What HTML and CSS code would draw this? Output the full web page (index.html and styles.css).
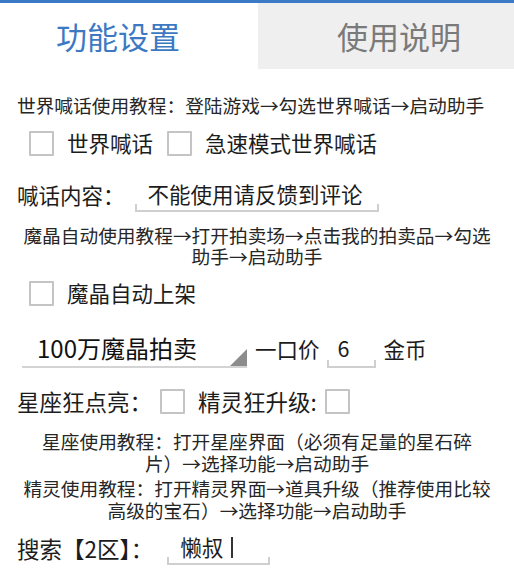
FILE: index.html
```
<!DOCTYPE html>
<html lang="zh-CN">
<head>
<meta charset="utf-8">
<link rel="stylesheet" href="styles.css">
</head>
<body>
<div class="topbar"></div>
<div class="tabs">
  <div class="tab tab-active">功能设置</div>
  <div class="tab tab-idle">使用说明</div>
</div>
<div class="content">
  <div class="tut tut-left tut1">世界喊话使用教程<span class="p">：</span>登陆游戏→勾选世界喊话→启动助手</div>
  <div class="row row-check row-a">
    <span class="cb"></span><span class="label">世界喊话</span>
    <span class="cb"></span><span class="label">急速模式世界喊话</span>
  </div>
  <div class="row row-shout">
    <span class="label">喊话内容<span class="p">：</span></span>
    <div class="edit edit-shout">不能使用请反馈到评论</div>
  </div>
  <div class="tut tut2">魔晶自动使用教程→打开拍卖场→点击我的拍卖品→勾选<br>助手→启动助手</div>
  <div class="row row-check row-b">
    <span class="cb"></span><span class="label">魔晶自动上架</span>
  </div>
  <div class="row row-sell">
    <div class="spinner">100万魔晶拍卖</div>
    <span class="label label-price">一口价</span>
    <div class="edit edit-price">6</div>
    <span class="label">金币</span>
  </div>
  <div class="row row-star">
    <span class="label label-big">星座狂点亮<span class="p">：</span></span>
    <span class="cb"></span>
    <span class="label label-big">精灵狂升级:</span>
    <span class="cb"></span>
  </div>
  <div class="tut tut3">星座使用教程<span class="p">：</span>打开星座界面<span class="p">（</span>必须有足量的星石碎<br>片<span class="p">）</span>→选择功能→启动助手</div>
  <div class="tut tut4">精灵使用教程<span class="p">：</span>打开精灵界面→道具升级<span class="p">（</span>推荐使用比较<br>高级的宝石<span class="p">）</span>→选择功能→启动助手</div>
  <div class="row row-search">
    <span class="label label-big">搜索【2区】<span class="p">：</span></span>
    <div class="edit edit-search">懒叔<span class="caret"></span></div>
  </div>
</div>
</body>
</html>
```
FILE: styles.css
```
html, body {
  margin: 0;
  padding: 0;
  background: #ffffff;
}
body {
  width: 514px;
  height: 569px;
  overflow: hidden;
  font-family: "Noto Sans CJK SC", "Noto Sans", sans-serif;
  color: #1c1c1c;
}
.p {
  font-family: "Noto Sans CJK TC", "Noto Sans CJK SC", sans-serif;
}
.topbar {
  height: 3px;
  background: #3b7bc6;
}
.tabs {
  display: grid;
  grid-template-columns: 258px 256px;
  height: 66px;
}
.tab {
  display: flex;
  align-items: center;
  justify-content: center;
  font-size: 31px;
  line-height: 66px;
}
.tab-active {
  background: #ffffff;
  color: #3c79c2;
  padding-right: 22px;
}
.tab-idle {
  background: #efefef;
  color: #7a7a7a;
  padding-left: 26px;
}
.content {
  display: flex;
  flex-direction: column;
}
.tut {
  font-size: 18.7px;
  line-height: 22px;
  color: #262626;
  text-align: center;
  white-space: nowrap;
}
.tut-left {
  text-align: left;
  padding-left: 17px;
}
.tut1 { margin-top: 25px; }
.tut2 { margin-top: 12px; line-height: 21px; }
.tut3 { margin-top: 14px; }
.tut4 { margin-top: 3px; line-height: 21.5px; }
.row {
  display: flex;
  align-items: center;
  white-space: nowrap;
}
.label {
  font-size: 21.5px;
  line-height: 30px;
  color: #1c1c1c;
}
.label-big {
  font-size: 22.5px;
}
.cb {
  width: 25px;
  height: 25px;
  box-sizing: border-box;
  border: 2px solid #c4c4c4;
  border-radius: 1px;
  flex: none;
}
.row-check {
  height: 30px;
  padding-left: 29px;
}
.row-check .cb + .label { margin-left: 13px; }
.row-check .label + .cb { margin-left: 14px; }
.row-a { margin-top: 12px; }
.row-b { margin-top: 12px; }
.row-shout {
  margin-top: 20px;
  height: 34px;
  padding-left: 17px;
}
.edit {
  position: relative;
  box-sizing: border-box;
  display: flex;
  align-items: center;
  border-bottom: 2px solid #cfcfcf;
  font-size: 21.5px;
  color: #1c1c1c;
}
.edit::before,
.edit::after {
  content: "";
  position: absolute;
  bottom: 0;
  width: 2px;
  height: 6px;
  background: #cfcfcf;
}
.edit::before { left: 0; }
.edit::after { right: 0; }
.edit-shout {
  margin-left: 10px;
  width: 244px;
  height: 34px;
  padding-left: 13px;
  line-height: 32px;
}
.row-sell {
  margin-top: 22px;
  height: 38px;
  padding-left: 22px;
}
.spinner {
  position: relative;
  box-sizing: border-box;
  width: 225px;
  height: 38px;
  padding-left: 15px;
  border-bottom: 2px solid #d4d4d4;
  font-size: 24px;
  line-height: 36px;
  color: #111111;
}
.spinner::after {
  content: "";
  position: absolute;
  right: 0;
  bottom: 0;
  width: 0;
  height: 0;
  border-style: solid;
  border-width: 0 0 17px 17px;
  border-color: transparent transparent #8c8c8c transparent;
}
.label-price { margin-left: 8px; }
.edit-price {
  margin-left: 7px;
  margin-right: 8px;
  width: 49px;
  height: 38px;
  padding-left: 11px;
  line-height: 36px;
}
.row-star {
  margin-top: 18px;
  height: 30px;
  padding-left: 17px;
}
.row-star .label + .cb { margin-left: 8px; }
.row-star .cb + .label { margin-left: 13px; }
.row-search {
  margin-top: 11px;
  height: 34px;
  padding-left: 17px;
}
.edit-search {
  margin-left: 14px;
  width: 103px;
  height: 34px;
  padding-left: 13px;
  line-height: 30px;
  align-items: center;
}
.caret {
  display: inline-block;
  width: 2px;
  height: 21px;
  background: #333333;
  margin-left: 8px;
}
```
